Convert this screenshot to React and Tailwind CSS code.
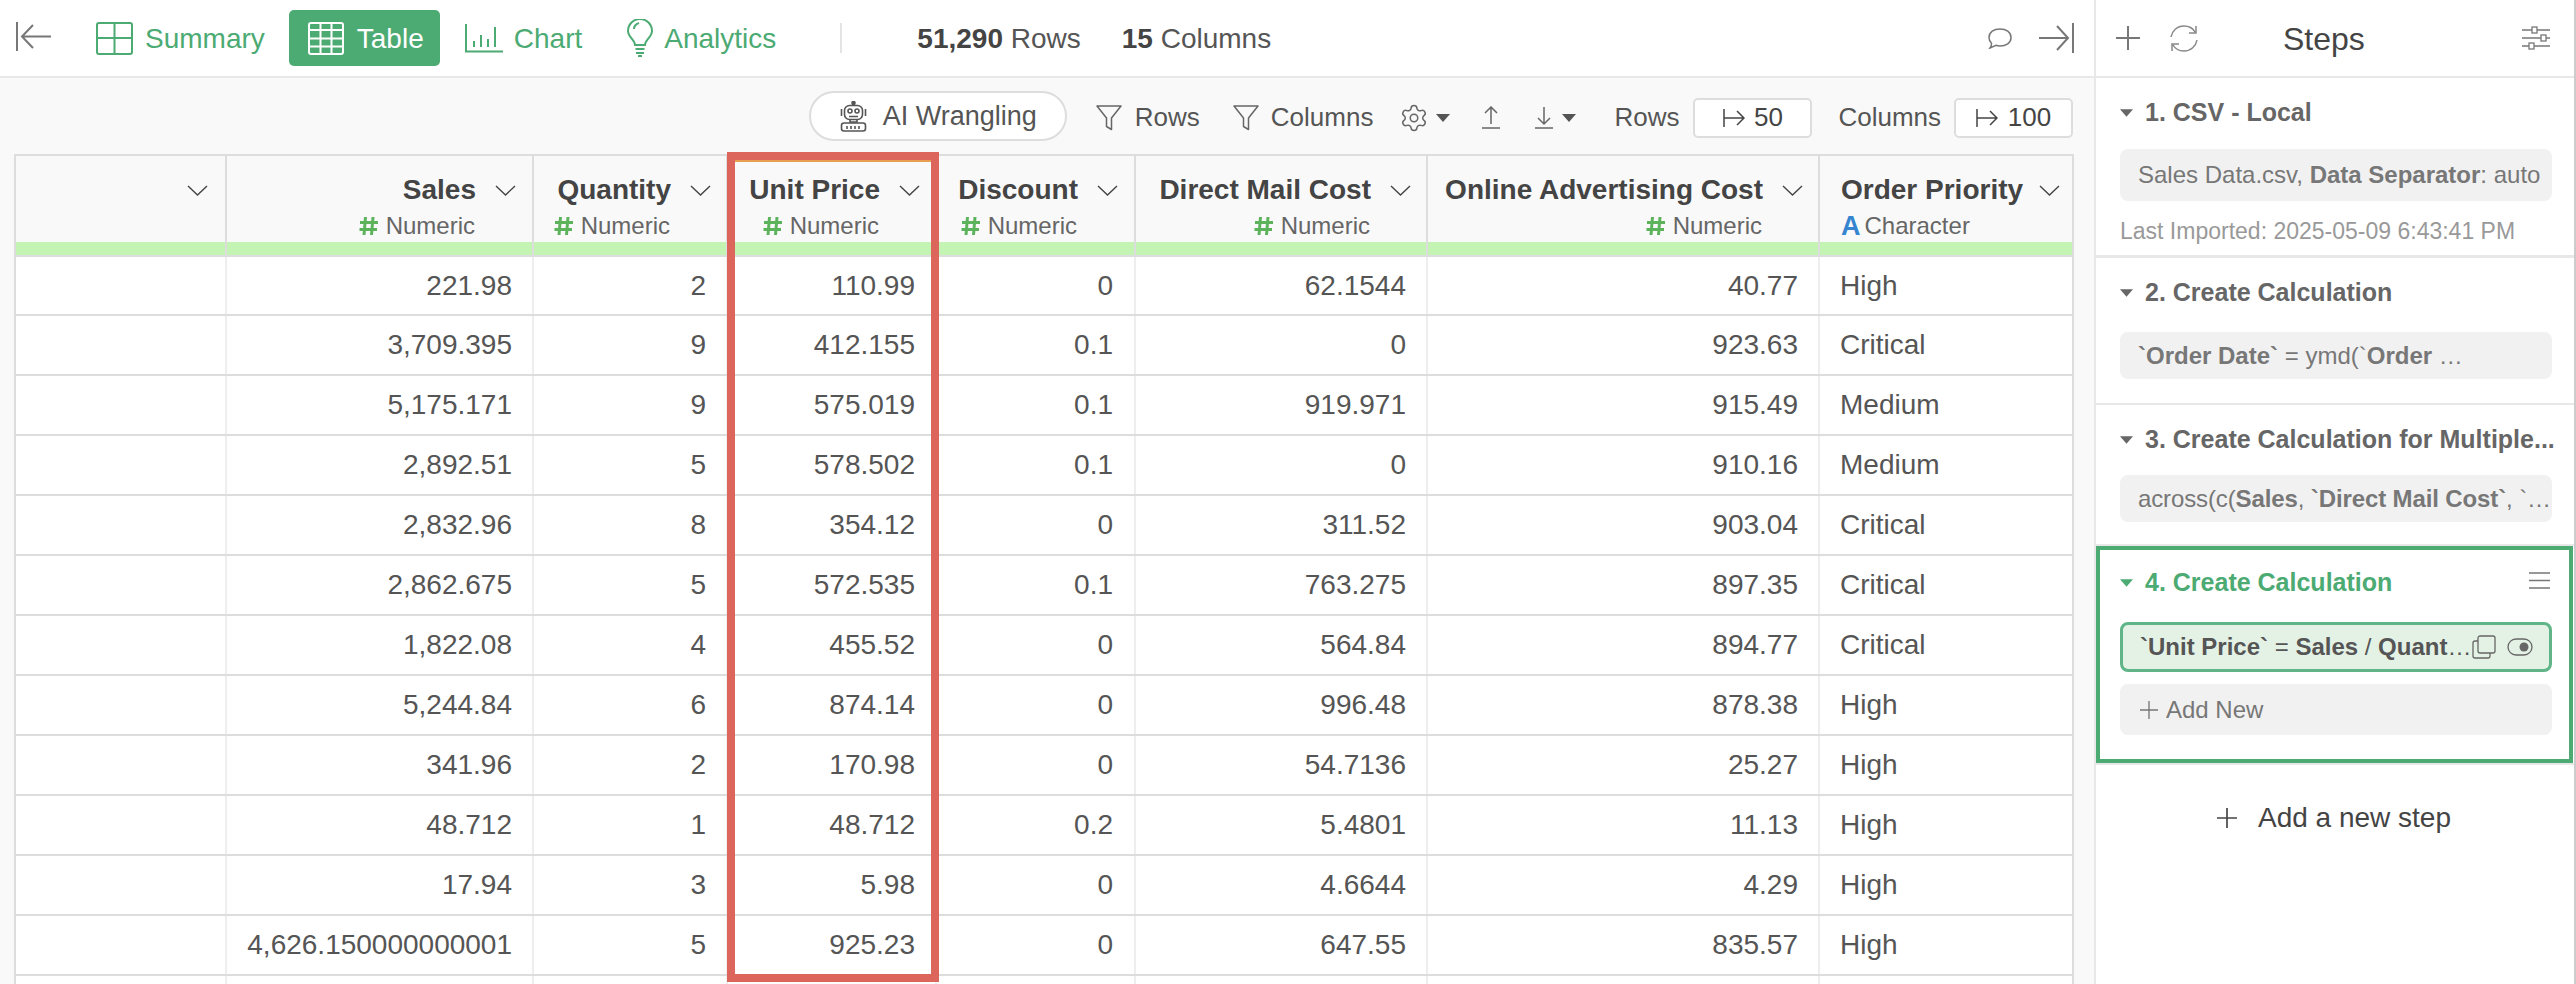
import React from "react";
import { Settings } from "lucide-react";

const Chevron = () => (
  <svg width="21" height="11" viewBox="0 0 21 11" className="shrink-0" fill="none" stroke="#444" strokeWidth="1.4"><path d="M1 1l9.5 9L20 1" /></svg>
);
const Hash = () => (
  <svg width="19" height="20" viewBox="0 0 19 20" className="shrink-0" fill="none" stroke="#5cb35c" strokeWidth="3"><path d="M6.5 1L5 19M14 1l-1.500 18M1 6.500h18M0.500 13.500h17.500" /></svg>
);
const Caret = ({ color = "#555", w = 14, h = 8 }) => (
  <svg width={w} height={h} viewBox="0 0 14 8" className="shrink-0" fill={color}><path d="M0 0h14L7 8z" /></svg>
);
const Funnel = () => (
  <svg width="26" height="26" viewBox="0 0 26 26" className="shrink-0" fill="none" stroke="#666" strokeWidth="1.500"><path d="M1 1h24L15.500 13v11.500l-5-3V13z" strokeLinejoin="round" /></svg>
);
const ToArrow = () => (
  <svg width="22" height="18" viewBox="0 0 22 18" className="shrink-0" fill="none" stroke="#444" strokeWidth="1.500"><path d="M1 0v18M1 9h20M14 2l7 7-7 7" /></svg>
);
const Plus = ({ s = 24, c = "#666", sw = 2 }) => (
  <svg width={s} height={s} viewBox="0 0 24 24" className="shrink-0" fill="none" stroke={c} strokeWidth={sw}><path d="M12 0v24M0 12h24" /></svg>
);

const SummaryIcon = () => (
  <svg width="37" height="33" viewBox="0 0 37 33" className="shrink-0" fill="none" stroke="#4caa73" strokeWidth="2"><rect x="1" y="1" width="35" height="31" rx="2" /><path d="M18.500 1v31M1 16h35" /></svg>
);
const TableIcon = () => (
  <svg width="36" height="33" viewBox="0 0 36 33" className="shrink-0" fill="none" stroke="#fff" strokeWidth="2"><rect x="1" y="1" width="34" height="31" rx="2" /><path d="M1 8h34M12.500 1v31M23.500 1v31M1 16.500h34M1 24.500h34" /></svg>
);
const ChartIcon = () => (
  <svg width="38" height="29" viewBox="0 0 38 29" className="shrink-0" fill="none" stroke="#4caa73" strokeWidth="2"><path d="M1 0v27.500h37M9 17v6M16 11v12M23 15v8M30 3v20" /></svg>
);
const BulbIcon = () => (
  <svg width="26" height="38" viewBox="0 0 26 38" className="shrink-0" fill="none" stroke="#4caa73" strokeWidth="2"><path d="M8 26c0-5-7-8-7-14a12 12 0 0 1 24 0c0 6-7 9-7 14zM8.500 30h9M9 34h8M11 37h4M7 10c0-3 2-5 5-6" /></svg>
);
const Robot = () => (
  <svg width="27" height="31" viewBox="0 0 27 31" className="shrink-0" fill="none" stroke="#555" strokeWidth="1.600"><path d="M13.500 0v4" /><circle cx="13.500" cy="2" r="1.500" fill="#555" /><rect x="4.500" y="4.500" width="18" height="14" rx="5" /><circle cx="10" cy="10" r="2" /><circle cx="17" cy="10" r="2" /><path d="M9 15.500h9M1.500 8v7M25.500 8v7M10 19v2h7v-2" /><rect x="1.500" y="22" width="24" height="8" rx="2.500" /><path d="M7 25v3M11 25v3M15 25v3M19 25v3" /></svg>
);

const cols = [
  { t: "", w: "w-[211px]", h: "pr-[17px]", c: "" },
  { t: "Sales", w: "w-[307px]", n: true, h: "pr-[16px]", c: "pr-[20px]" },
  { t: "Quantity", w: "w-[194px]", n: true, h: "pr-[15px]", c: "pr-[20px]" },
  { t: "Unit Price", w: "w-[209px]", n: true, h: "pr-[15px]", c: "pr-[20px]" },
  { t: "Discount", w: "w-[199px]", n: true, h: "pr-[16px]", c: "pr-[21px]" },
  { t: "Direct Mail Cost", w: "w-[292px]", n: true, h: "pr-[15px]", c: "pr-[20px]" },
  { t: "Online Advertising Cost", w: "w-[392px]", n: true, h: "pr-[15px]", c: "pr-[20px]" },
  { t: "Order Priority", w: "w-[252px]", c: "" },
];
const rows = [
  ["221.98", "2", "110.99", "0", "62.1544", "40.77", "High"],
  ["3,709.395", "9", "412.155", "0.1", "0", "923.63", "Critical"],
  ["5,175.171", "9", "575.019", "0.1", "919.971", "915.49", "Medium"],
  ["2,892.51", "5", "578.502", "0.1", "0", "910.16", "Medium"],
  ["2,832.96", "8", "354.12", "0", "311.52", "903.04", "Critical"],
  ["2,862.675", "5", "572.535", "0.1", "763.275", "897.35", "Critical"],
  ["1,822.08", "4", "455.52", "0", "564.84", "894.77", "Critical"],
  ["5,244.84", "6", "874.14", "0", "996.48", "878.38", "High"],
  ["341.96", "2", "170.98", "0", "54.7136", "25.27", "High"],
  ["48.712", "1", "48.712", "0.2", "5.4801", "11.13", "High"],
  ["17.94", "3", "5.98", "0", "4.6644", "4.29", "High"],
  ["4,626.150000000001", "5", "925.23", "0", "647.55", "835.57", "High"],
  ["", "", "", "", "", "", ""],
];

function HeaderCell({ c, i }) {
  const last = i === cols.length - 1;
  return (
    <div className={`${c.w} shrink-0 flex flex-col ${last ? "" : "border-r-2 border-[#dddddd]"}`}>
      <div className="h-[86px] flex flex-col pt-[19px]">
        {c.n ? (
          <div className={`flex flex-col items-end ${c.h}`}>
            <div className="flex items-center gap-[19px] h-[30px]">
              <span className="text-[28px] font-bold text-[#444] whitespace-nowrap">{c.t}</span>
              <Chevron />
            </div>
            <div className="flex items-center gap-[8px] h-[30px] mt-[6px] pr-[41px]">
              <Hash />
              <span className="text-[24px] text-[#666]">Numeric</span>
            </div>
          </div>
        ) : c.t ? (
          <div className="flex flex-col pl-[21px] pr-[12px]">
            <div className="flex items-center justify-between h-[30px]">
              <span className="text-[28px] font-bold text-[#444] whitespace-nowrap">{c.t}</span>
              <Chevron />
            </div>
            <div className="flex items-center gap-[4px] h-[30px] mt-[6px]">
              <span className="text-[27px] leading-none font-bold text-[#3585d0]">A</span>
              <span className="text-[24px] text-[#666]">Character</span>
            </div>
          </div>
        ) : (
          <div className={`flex justify-end h-[30px] items-center ${c.h}`}><Chevron /></div>
        )}
      </div>
      <div className="h-[13px] bg-[#c3f4b4]" />
    </div>
  );
}

function Row({ r, first }) {
  const cells = ["", ...r];
  return (
    <div className={`flex border-b-2 border-[#dddddd] ${first ? "h-[59px]" : "h-[60px]"}`}>
      {cols.map((c, i) => {
        const last = i === cols.length - 1;
        return (
          <div key={i} className={`${c.w} shrink-0 flex items-center pl-[20px] ${c.c} text-[28px] text-[#555] whitespace-nowrap ${c.n ? "justify-end" : ""} ${last ? "" : "border-r-2 border-[#eeeeee]"}`}>
            {cells[i]}
          </div>
        );
      })}
    </div>
  );
}

function Table() {
  return (
    <div className="relative ml-[14px] w-[2060px] border-x-2 border-t-2 border-[#dddddd] bg-white">
      <div className="flex border-b-2 border-[#dddddd] bg-[#f9f9f9]">
        {cols.map((c, i) => <HeaderCell key={i} c={c} i={i} />)}
      </div>
      {rows.map((r, i) => <Row key={i} r={r} first={i === 0} />)}
      <div className="absolute left-[711px] top-[-4px] w-[212px] h-[830px] border-[8px] border-[#dc665c]">
        <div className="h-[2px] bg-[#e8a050]" />
      </div>
    </div>
  );
}

function TopBar() {
  return (
    <div className="h-[78px] shrink-0 border-b-2 border-[#e8e8e8] bg-white flex items-center pl-[16px] pr-[20px]">
      <svg width="35" height="29" viewBox="0 0 35 29" className="shrink-0 -mt-[3px]" fill="none" stroke="#777" strokeWidth="2"><path d="M1 0v29M35 14.500H6M17 3L6 14.500 17 26" /></svg>
      <div className="ml-[45px] flex items-center gap-[12px] text-[28px] text-[#4caa73]"><SummaryIcon /><span className="pt-[2px]">Summary</span></div>
      <div className="ml-[24px] h-[56px] w-[151px] rounded-[5px] bg-[#4caa73] flex items-center pl-[19px] gap-[13px] text-[28px] text-white"><TableIcon /><span className="pt-[2px]">Table</span></div>
      <div className="ml-[25px] flex items-center gap-[11px] text-[28px] text-[#4caa73]"><ChartIcon /><span className="pt-[2px]">Chart</span></div>
      <div className="ml-[45px] flex items-center gap-[11px] text-[28px] text-[#4caa73]"><BulbIcon /><span className="pt-[2px]">Analytics</span></div>
      <div className="ml-[64px] w-[2px] h-[30px] bg-[#e4e4e4]" />
      <div className="ml-[75px] pt-[2px] text-[28px] text-[#555] whitespace-nowrap"><b className="text-[#444]">51,290</b> Rows</div>
      <div className="ml-[41px] pt-[2px] text-[28px] text-[#555] whitespace-nowrap"><b className="text-[#444]">15</b> Columns</div>
      <div className="ml-auto flex items-center gap-[27px]">
        <svg width="24" height="21" viewBox="0 0 24 21" fill="none" stroke="#777" strokeWidth="1.500"><path d="M12 1c6 0 11 3 11 8.500S18 18 12 18c-1.500 0-3-.3-4-.7L2 20c1-1.500 1.600-3 1.500-4.700C1.800 13.700 1 11.700 1 9.500 1 4 6 1 12 1z" /></svg>
        <svg width="35" height="30" viewBox="0 0 35 30" fill="none" stroke="#777" strokeWidth="2"><path d="M34 0v30M0 15h29M18 3l11 12-11 12" /></svg>
      </div>
    </div>
  );
}

function Toolbar() {
  return (
    <div className="h-[76px] shrink-0 flex items-center justify-end pt-[3px] pr-[21px] text-[26px] text-[#555]">
      <div className="w-[258px] h-[50px] -mt-[3px] rounded-full border-2 border-[#dddddd] bg-white flex items-center pl-[29px] gap-[16px]"><Robot /><span className="text-[27px] whitespace-nowrap">AI Wrangling</span></div>
      <div className="ml-[29px]"><Funnel /></div>
      <span className="ml-[13px]">Rows</span>
      <div className="ml-[33px]"><Funnel /></div>
      <span className="ml-[12px]">Columns</span>
      <Settings size={30} strokeWidth={1.2} color="#666" className="ml-[26px] shrink-0" />
      <div className="ml-[7px]"><Caret /></div>
      <svg width="18" height="23" viewBox="0 0 18 23" className="ml-[32px] shrink-0" fill="none" stroke="#666" strokeWidth="1.500"><path d="M0 22h18M9 18V1M3 7l6-6 6 6" /></svg>
      <svg width="18" height="23" viewBox="0 0 18 23" className="ml-[35px] shrink-0" fill="none" stroke="#666" strokeWidth="1.500"><path d="M0 22h18M9 1v17M3 12l6 6 6-6" /></svg>
      <div className="ml-[9px]"><Caret /></div>
      <span className="ml-[38px]">Rows</span>
      <div className="ml-[14px] w-[119px] h-[40px] rounded-[5px] border-2 border-[#dddddd] bg-white flex items-center justify-center gap-[9px] text-[#444]"><ToArrow /><span>50</span></div>
      <span className="ml-[26px]">Columns</span>
      <div className="ml-[13px] w-[119px] h-[40px] rounded-[5px] border-2 border-[#dddddd] bg-white flex items-center justify-center gap-[10px] text-[#444]"><ToArrow /><span>100</span></div>
    </div>
  );
}

const Box = ({ children, cls = "" }) => (
  <div className={`rounded-[8px] bg-[#f1f1f1] flex items-center text-[24px] text-[#777] whitespace-nowrap ${cls}`}>{children}</div>
);
const StepTitle = ({ children, color = "#666" }) => (
  <div className="flex items-center gap-[12px] h-[30px] text-[25px] font-bold whitespace-nowrap" style={{ color }}>
    <Caret color={color} w={13} h={8} />
    <span>{children}</span>
  </div>
);

function Steps() {
  return (
    <div className="w-[482px] shrink-0 h-full border-l-2 border-r-2 border-l-[#e8e8e8] border-r-[#cccccc] flex flex-col bg-white">
      <div className="h-[78px] shrink-0 border-b-2 border-[#e8e8e8] relative flex items-center pl-[20px]">
        <Plus s={24} c="#777" />
        <svg width="28" height="27" viewBox="0 0 28 27" className="ml-[30px] shrink-0" fill="none" stroke="#888" strokeWidth="1.500"><path d="M1 12C2 6 7 1 14 1c5 0 9 2.500 11 6M26 1v7h-7M27 15c-1 6-6 11-13 11-5 0-9-2.500-11-6M2 26v-7h7" /></svg>
        <span className="ml-[85px] pt-[2px] text-[32px] text-[#444]">Steps</span>
        <svg width="28" height="24" viewBox="0 0 28 24" className="ml-auto mr-[24px] shrink-0" fill="none" stroke="#777" strokeWidth="1.300"><path d="M0 4h10M15 4h13M0 12h19M24 12h4M0 20h7M12 20h16" /><rect x="10" y="1" width="5" height="6" /><rect x="19" y="9" width="5" height="6" /><rect x="7" y="17" width="5" height="6" /></svg>
      </div>
      <div className="border-b-[3px] border-[#e8e8e8] pl-[24px] pr-[22px] pt-[20px] pb-[9px]">
        <StepTitle>1. CSV - Local</StepTitle>
        <Box cls="mt-[21px] h-[52px] pl-[18px]"><span>Sales Data.csv, <b>Data Separator</b>: auto</span></Box>
        <div className="mt-[15px] h-[30px] leading-[30px] text-[23px] text-[#999] whitespace-nowrap">Last Imported: 2025-05-09 6:43:41 PM</div>
      </div>
      <div className="border-b-2 border-[#e8e8e8] pl-[24px] pr-[22px] pt-[20px] pb-[24px]">
        <StepTitle>2. Create Calculation</StepTitle>
        <Box cls="mt-[24px] h-[47px] pl-[18px]"><span><b>`Order Date`</b> = ymd(`<b>Order</b> …</span></Box>
      </div>
      <div className="border-b-2 border-[#e8e8e8] pl-[24px] pr-[20px] pt-[20px] pb-[22px]">
        <StepTitle>3. Create Calculation for Multiple...</StepTitle>
        <Box cls="mt-[20px] h-[47px] pl-[18px] mr-[2px]"><span className="tracking-[-0.12px]">across(c(<b>Sales</b>, <b>`Direct Mail Cost`</b>, `…</span></Box>
      </div>
      <div className="border-4 border-[#4caa73] pl-[20px] pr-[17px] pt-[18px] pb-[24px] mr-[1px]">
        <div className="flex items-center justify-between pr-[2px]">
          <StepTitle color="#4caa73">4. Create Calculation</StepTitle>
          <svg width="21" height="17" viewBox="0 0 21 17" className="-mt-[6px]" fill="none" stroke="#777" strokeWidth="1.300"><path d="M0 1h21M0 8.500h21M0 16h21" /></svg>
        </div>
        <div className="mt-[24px] h-[50px] rounded-[8px] border-[3px] border-[#5fb587] bg-[#e4f2e6] flex items-center pl-[17px] pr-[16px] text-[24px] text-[#555] whitespace-nowrap">
          <span><b>`Unit Price`</b> = <b>Sales</b> / <b>Quant</b>…</span>
          <svg width="24" height="24" viewBox="0 0 24 24" className="ml-auto shrink-0" fill="none" stroke="#666" strokeWidth="1.300"><rect x="6" y="1" width="17" height="17" rx="2" /><path d="M6 6H3a2 2 0 0 0-2 2v13a2 2 0 0 0 2 2h13a2 2 0 0 0 2-2v-3" /></svg>
          <svg width="26" height="18" viewBox="0 0 26 18" className="ml-[11px] shrink-0" fill="none" stroke="#666" strokeWidth="1.300"><rect x="1" y="1" width="24" height="16" rx="8" /><circle cx="17" cy="9" r="4.500" fill="#666" stroke="none" /></svg>
        </div>
        <Box cls="mt-[12px] h-[51px] pl-[20px] gap-[8px]"><Plus s={18} c="#777" sw={1.800} /><span>Add New</span></Box>
      </div>
      <div className="h-[2px] bg-[#e8e8e8]" />
      <div className="mt-[32px] flex items-center justify-center pr-[2px] gap-[21px] text-[28px] text-[#444]">
        <Plus s={20} c="#444" />
        <span>Add a new step</span>
      </div>
    </div>
  );
}

export default function App() {
  return (
    <div className="w-[2576px] h-[984px] overflow-hidden flex font-['Liberation_Sans',Arial,sans-serif] bg-white">
      <div className="w-[2094px] shrink-0 flex flex-col bg-[#f9f9f9]">
        <TopBar />
        <Toolbar />
        <Table />
      </div>
      <Steps />
    </div>
  );
}
